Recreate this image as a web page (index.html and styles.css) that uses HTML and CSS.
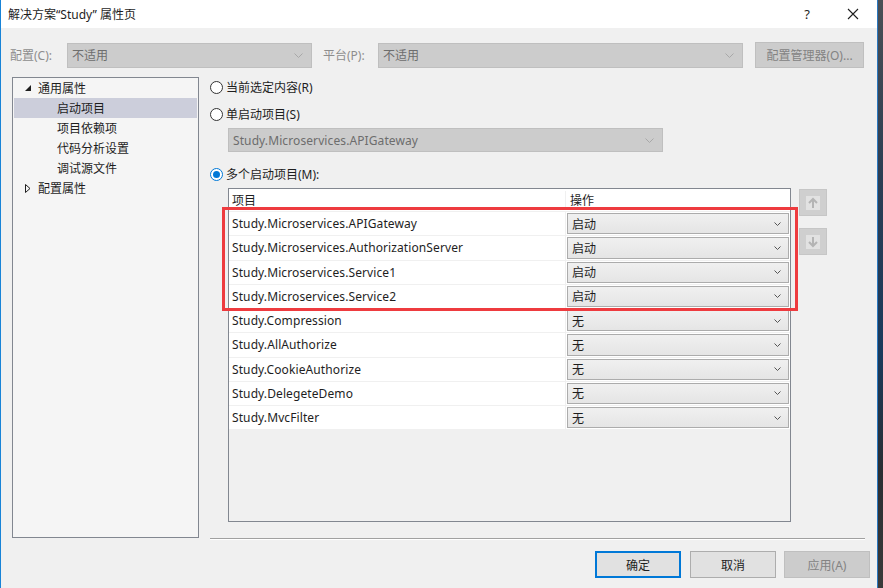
FILE: index.html
```html
<!DOCTYPE html>
<html lang="zh-CN">
<head>
<meta charset="utf-8">
<title>解决方案“Study” 属性页</title>
<link rel="stylesheet" href="styles.css">
</head>
<body>
<div class="screen">
  <div class="window">
    <div class="titlebar">
      <span class="title">解决方案“Study” 属性页</span>
      <span class="help">?</span>
      <svg class="close" width="12" height="12" viewBox="0 0 12 12"><path d="M1 1 L11 11 M11 1 L1 11" stroke="#1e1e1e" stroke-width="1.1" fill="none"/></svg>
    </div>
    <div class="content">
      <div class="config-row">
        <span class="lbl lbl-cfg">配置(C):</span>
        <div class="combo combo-disabled combo-cfg"><span>不适用</span><svg class="chev" width="9" height="5" viewBox="0 0 9 5"><path d="M0.5 0.5 L4.5 4.5 L8.5 0.5" stroke="#a8a8a8" fill="none"/></svg></div>
        <span class="lbl lbl-plat">平台(P):</span>
        <div class="combo combo-disabled combo-plat"><span>不适用</span><svg class="chev" width="9" height="5" viewBox="0 0 9 5"><path d="M0.5 0.5 L4.5 4.5 L8.5 0.5" stroke="#a8a8a8" fill="none"/></svg></div>
        <button class="btn btn-disabled btn-cfg">配置管理器(O)...</button>
      </div>
      <div class="main">
        <div class="tree">
          <div class="tree-row lvl1"><span class="exp"><svg width="6" height="6" viewBox="0 0 6 6"><polygon points="6,0 6,6 0,6" fill="#1e1e1e"/></svg></span>通用属性</div>
          <div class="tree-row lvl2 selected">启动项目</div>
          <div class="tree-row lvl2">项目依赖项</div>
          <div class="tree-row lvl2">代码分析设置</div>
          <div class="tree-row lvl2">调试源文件</div>
          <div class="tree-row lvl1"><span class="exp"><svg width="6" height="9" viewBox="0 0 6 9"><polygon points="0.5,0.5 5,4.5 0.5,8.5" fill="none" stroke="#1e1e1e"/></svg></span>配置属性</div>
        </div>
        <div class="pane">
          <label class="radio-row r1"><span class="radio"></span>当前选定内容(R)</label>
          <label class="radio-row r2"><span class="radio"></span>单启动项目(S)</label>
          <div class="combo combo-disabled combo-single"><span>Study.Microservices.APIGateway</span><svg class="chev" width="9" height="5" viewBox="0 0 9 5"><path d="M0.5 0.5 L4.5 4.5 L8.5 0.5" stroke="#a8a8a8" fill="none"/></svg></div>
          <label class="radio-row r3"><span class="radio checked"></span>多个启动项目(M):</label>
          <div class="table-area">
            <div class="grid">
              <div class="grid-head">
                <div class="c1">项目</div>
                <div class="c2">操作</div>
              </div>
              <div class="grid-row"><div class="c1">Study.Microservices.APIGateway</div><div class="c2"><div class="cell-combo"><span>启动</span><svg class="chev" width="7" height="4" viewBox="0 0 7 4"><path d="M0.5 0.5 L3.5 3.5 L6.5 0.5" stroke="#555" fill="none"/></svg></div></div></div>
              <div class="grid-row"><div class="c1">Study.Microservices.AuthorizationServer</div><div class="c2"><div class="cell-combo"><span>启动</span><svg class="chev" width="7" height="4" viewBox="0 0 7 4"><path d="M0.5 0.5 L3.5 3.5 L6.5 0.5" stroke="#555" fill="none"/></svg></div></div></div>
              <div class="grid-row"><div class="c1">Study.Microservices.Service1</div><div class="c2"><div class="cell-combo"><span>启动</span><svg class="chev" width="7" height="4" viewBox="0 0 7 4"><path d="M0.5 0.5 L3.5 3.5 L6.5 0.5" stroke="#555" fill="none"/></svg></div></div></div>
              <div class="grid-row"><div class="c1">Study.Microservices.Service2</div><div class="c2"><div class="cell-combo"><span>启动</span><svg class="chev" width="7" height="4" viewBox="0 0 7 4"><path d="M0.5 0.5 L3.5 3.5 L6.5 0.5" stroke="#555" fill="none"/></svg></div></div></div>
              <div class="grid-row"><div class="c1">Study.Compression</div><div class="c2"><div class="cell-combo"><span>无</span><svg class="chev" width="7" height="4" viewBox="0 0 7 4"><path d="M0.5 0.5 L3.5 3.5 L6.5 0.5" stroke="#555" fill="none"/></svg></div></div></div>
              <div class="grid-row"><div class="c1">Study.AllAuthorize</div><div class="c2"><div class="cell-combo"><span>无</span><svg class="chev" width="7" height="4" viewBox="0 0 7 4"><path d="M0.5 0.5 L3.5 3.5 L6.5 0.5" stroke="#555" fill="none"/></svg></div></div></div>
              <div class="grid-row"><div class="c1">Study.CookieAuthorize</div><div class="c2"><div class="cell-combo"><span>无</span><svg class="chev" width="7" height="4" viewBox="0 0 7 4"><path d="M0.5 0.5 L3.5 3.5 L6.5 0.5" stroke="#555" fill="none"/></svg></div></div></div>
              <div class="grid-row"><div class="c1">Study.DelegeteDemo</div><div class="c2"><div class="cell-combo"><span>无</span><svg class="chev" width="7" height="4" viewBox="0 0 7 4"><path d="M0.5 0.5 L3.5 3.5 L6.5 0.5" stroke="#555" fill="none"/></svg></div></div></div>
              <div class="grid-row"><div class="c1">Study.MvcFilter</div><div class="c2"><div class="cell-combo"><span>无</span><svg class="chev" width="7" height="4" viewBox="0 0 7 4"><path d="M0.5 0.5 L3.5 3.5 L6.5 0.5" stroke="#555" fill="none"/></svg></div></div></div>
              <div class="highlight"></div>
            </div>
            <div class="move-btns">
              <div class="move-btn"><svg width="14" height="14" viewBox="0 0 14 14"><rect x="0" y="0" width="14" height="14" fill="#e2e2e2"/><path d="M7 3 L7 12 M3 7 L7 3 L11 7" stroke="#b4b4b4" stroke-width="2" fill="none"/></svg></div>
              <div class="move-btn down"><svg width="14" height="14" viewBox="0 0 14 14"><rect x="0" y="0" width="14" height="14" fill="#e2e2e2"/><path d="M7 2 L7 11 M3 7 L7 11 L11 7" stroke="#b4b4b4" stroke-width="2" fill="none"/></svg></div>
            </div>
          </div>
          <div class="separator"></div>
          <div class="btn-row">
            <button class="btn btn-default">确定</button>
            <button class="btn btn-cancel">取消</button>
            <button class="btn btn-disabled">应用(A)</button>
          </div>
        </div>
      </div>
    </div>
  </div>
  <div class="desktop"></div>
</div>
</body>
</html>
```
FILE: styles.css
```css
* { box-sizing: border-box; }
html, body { margin: 0; padding: 0; }
body {
  font-family: "Noto Sans", "Noto Sans CJK SC", sans-serif;
  font-size: 12px;
  color: #1e1e1e;
  background: #1d2733;
}
.screen {
  display: flex;
  width: 883px;
  height: 588px;
  overflow: hidden;
}
.window {
  width: 878px;
  height: 588px;
  border-left: 1px solid #1883d7;
  border-right: 1px solid #2b78c0;
  background: #f0f0f0;
  display: flex;
  flex-direction: column;
}
.desktop {
  flex: 1;
  background: linear-gradient(#4a4f55 0%, #2c3e54 30%, #1a3a5c 60%, #2a2e33 80%, #3a3a3a 100%);
}
.titlebar {
  height: 28px;
  background: #ffffff;
  display: flex;
  align-items: center;
  padding-left: 7px;
}
.title { flex: 1; padding-bottom: 1px; }
.help { width: 14px; margin-right: 33px; font-size: 13px; text-align: center; }
.close { margin-right: 18px; margin-bottom: 1px; }
.content { display: flex; flex-direction: column; padding-top: 14px; }

.config-row {
  display: flex;
  align-items: center;
  height: 26px;
  padding-left: 9px;
}
.lbl { color: #8d8d8d; }
.lbl-cfg { width: 57px; }
.lbl-plat { width: 55px; margin-left: 11px; }
.combo {
  display: flex;
  align-items: center;
  justify-content: space-between;
  height: 25px;
  padding: 0 8px 0 4px;
  border: 1px solid #bfbfbf;
}
.combo-disabled { background: #cccccc; color: #6d6d6d; }
.combo-cfg { width: 245px; }
.combo-plat { width: 365px; }
.btn {
  font-family: inherit;
  font-size: 12px;
  color: #1e1e1e;
  height: 27px;
  width: 86px;
  padding: 0;
  background: #e1e1e1;
  border: 1px solid #adadad;
}
.btn-disabled { background: #cccccc; border-color: #bfbfbf; color: #838383; }
.btn-default { border: 2px solid #0078d7; }
.btn-cfg { width: 109px; height: 26px; margin-left: 12px; }

.main {
  display: flex;
  margin-top: 9px;
  padding-left: 11px;
}
.tree {
  width: 187px;
  height: 461px;
  border: 1px solid #828790;
  background: #f5f5f5;
  padding: 0 1px;
}
.tree-row {
  height: 20px;
  display: flex;
  align-items: center;
  white-space: nowrap;
}
.tree-row.lvl1 { padding-left: 9px; }
.tree-row.lvl2 { padding-left: 43px; }
.tree-row.selected { background: #cccedb; }
.exp { width: 15px; display: flex; align-items: center; padding-left: 2px; }

.pane {
  width: 660px;
  margin-left: 11px;
  display: flex;
  flex-direction: column;
}
.radio-row {
  display: flex;
  align-items: center;
  height: 20px;
}
.r2 { margin-top: 7px; }
.r3 { margin-top: 12px; }
.radio {
  width: 13px;
  height: 13px;
  border: 1px solid #333333;
  border-radius: 50%;
  background: #ffffff;
  margin-right: 3px;
  position: relative;
}
.radio.checked { border-color: #0078d7; }
.radio.checked::after {
  content: "";
  position: absolute;
  left: 2px; top: 2px;
  width: 7px; height: 7px;
  border-radius: 50%;
  background: #0078d7;
}
.combo-single { width: 435px; height: 24px; margin: 4px 0 0 18px; letter-spacing: 0.1px; }

.table-area {
  display: flex;
  margin-top: 4px;
  margin-left: 18px;
}
.grid {
  position: relative;
  width: 563px;
  height: 334px;
  border: 1px solid #828790;
  background: #f0f0f0;
}
.grid-head, .grid-row {
  display: flex;
  background: #ffffff;
  border-bottom: 1px solid #f0f0f0;
}
.grid-head { height: 23px; align-items: center; }
.grid-row { height: 24.25px; }
.c1 {
  width: 337px;
  padding-left: 3px;
  border-right: 1px solid #f0f0f0;
  display: flex;
  align-items: center;
  white-space: nowrap;
  overflow: hidden;
  letter-spacing: 0.1px;
}
.c2 { flex: 1; padding-left: 4px; }
.grid-row .c2 { padding: 1px; }
.cell-combo {
  height: 100%;
  border: 1px solid #acacac;
  background: linear-gradient(#f0f0f0, #e5e5e5);
  display: flex;
  align-items: center;
  justify-content: space-between;
  padding: 0 7px 0 4px;
}
.highlight {
  position: absolute;
  left: -7px;
  top: 18px;
  width: 576px;
  height: 104px;
  border: 3px solid #ee3b3f;
}
.move-btns {
  display: flex;
  flex-direction: column;
  margin-left: 8px;
  margin-top: 1px;
}
.move-btn {
  width: 28px;
  height: 27px;
  background: #cfcfcf;
  border: 1px solid #c6c6c6;
  display: flex;
  align-items: center;
  justify-content: center;
}
.move-btn.down { margin-top: 12px; }

.separator {
  width: 655px;
  height: 2px;
  margin-top: 16px;
  border-top: 1px solid #a0a0a0;
  border-bottom: 1px solid #ffffff;
}
.btn-row {
  display: flex;
  justify-content: flex-end;
  margin-top: 11px;
}
.btn-row .btn-default { margin-right: 9px; }
.btn-row .btn-cancel { margin-right: 8px; }
```
